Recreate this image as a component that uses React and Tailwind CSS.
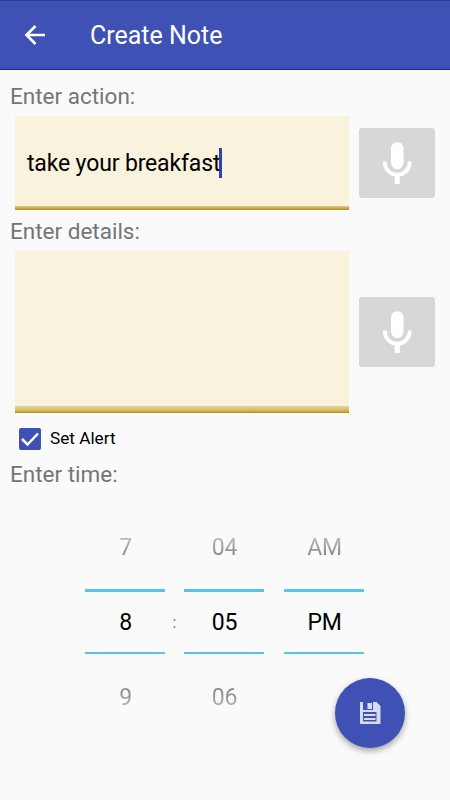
function MicButton() {
  return (
    <button className="flex h-[70px] w-[76px] items-center justify-center rounded-[3px] bg-[#d6d8d7]" aria-label="Record">
      <svg className="-mt-[3px]" width="32" height="46" viewBox="0 0 32 46" fill="none">
        <path d="M10 9c0-2 2.500-5.500 4.500-5.500h3.500c2 0 4.500 3.500 4.500 5.500v14.500c0 2-2.500 6.500-4.500 6.500h-3.500c-2 0-4.500-4.500-4.500-6.500z" fill="white" />
        <path d="M3.750 22.500c0 8 5.600 13.250 12.500 13.250s12.500-5.250 12.500-13.250" stroke="white" strokeWidth="4" />
        <path d="M16.250 34v11" stroke="white" strokeWidth="5" />
      </svg>
    </button>
  )
}

function BackIcon() {
  return (
    <svg width="22" height="22" viewBox="0 0 22 22" fill="none" stroke="white" strokeWidth="2.600">
      <path d="M21 11H3M11.500 2 2.500 11l9 9" />
    </svg>
  )
}

function SaveIcon() {
  return (
    <svg width="22" height="22" viewBox="0 0 22 22">
      <path d="M1 0h3v8h10V0h3.500l4 4V21q0 1-1 1h-18.500q-1 0-1-1z" fill="#d9dcf0" />
      <path d="M8.500 1h4.500v6H8.500z" fill="#d9dcf0" />
      <path d="M4 10h13.500v9.500h-13.500z" fill="#3f51b5" />
      <path d="M5 12h11.500v2h-11.500zM5 16h11.500v2h-11.500z" fill="#d9dcf0" />
    </svg>
  )
}

function PickerColumn({ previous, value, next }) {
  return (
    <div className="w-20 text-center text-[23px] tracking-[-0.3px]">
      <div className="h-[72px] bg-linear-to-b from-[#b8b8b8] from-30% to-[#858585] to-55% bg-clip-text pl-px leading-[61px] text-transparent">{previous}</div>
      <div className="h-[65px] border-t-3 border-b-2 border-[#5ac4e8] pl-px leading-[61px] text-black">{value}</div>
      <div className="h-[73px] bg-linear-to-b from-[#858585] from-45% to-[#b8b8b8] to-75% bg-clip-text pt-[13px] pl-px leading-[61px] text-transparent">{next}</div>
    </div>
  )
}

export default function App() {
  return (
    <div className="relative h-[800px] w-[450px] overflow-hidden bg-[#fafafa] font-['Roboto',sans-serif] text-[22.500px] text-[#757575]">
      <header className="flex h-[70px] items-center border-t border-b border-t-[#303f8d] border-b-[#142b91] bg-[#3f51b5] pl-6 text-white">
        <BackIcon />
        <h1 className="ml-11 pt-0.5 text-[25px] leading-8">Create Note</h1>
      </header>

      <main>
        <div className="flex h-[46px] items-center pt-2 pl-2.5">Enter action:</div>
        <div className="flex h-[94px] items-center gap-2.5 pl-[15px]">
          <div className="flex h-full w-[334px] flex-col bg-[#f9f2dc]">
            <div className="flex flex-1 items-center pt-1 pl-3 text-black">
              <span className="pt-0.5 text-[23px] tracking-[-0.15px]">take your breakfast</span>
              <span className="-ml-px h-[30px] w-[3px] bg-[#2d43b5]" />
            </div>
            <div className="h-1 bg-linear-to-b from-[#dfcc83] to-[#b78e05]" />
          </div>
          <MicButton />
        </div>

        <div className="flex h-[41px] items-center pt-[3px] pl-2.5">Enter details:</div>
        <div className="flex h-[162px] items-center gap-2.5 pl-[15px]">
          <div className="flex h-full w-[334px] flex-col justify-end bg-[#f9f2dc]">
            <div className="h-[7px] bg-linear-to-b from-[#e3d394] from-10% via-[#d2bd62] via-60% to-[#b78e05]" />
          </div>
          <MicButton />
        </div>

        <div className="flex h-[51px] items-center pl-[19px] text-black">
          <svg width="22" height="22" viewBox="0 0 22 22" fill="none">
            <rect width="22" height="22" rx="2" fill="#3f51b5" />
            <path d="m3 11 5.500 5.500L19 5.500" stroke="white" strokeWidth="2.500" />
          </svg>
          <span className="ml-[9px] pt-px text-[17.200px]">Set Alert</span>
        </div>

        <div className="flex h-[22px] items-center pl-2.5">Enter time:</div>

        <div className="flex pt-[31px] pl-[85px]">
          <PickerColumn previous="7" value="8" next="9" />
          <div className="w-[19px] pt-[89px] text-center text-base leading-[34px]">:</div>
          <PickerColumn previous="04" value="05" next="06" />
          <div className="w-5" />
          <PickerColumn previous="AM" value="PM" next="" />
        </div>
      </main>

      <button
        className="absolute top-[678px] left-[335px] flex size-[70px] items-center justify-center rounded-full bg-[#3f51b5] shadow-[0_3px_6px_rgba(0,0,0,0.35)]"
        aria-label="Save note"
      >
        <SaveIcon />
      </button>
    </div>
  )
}
